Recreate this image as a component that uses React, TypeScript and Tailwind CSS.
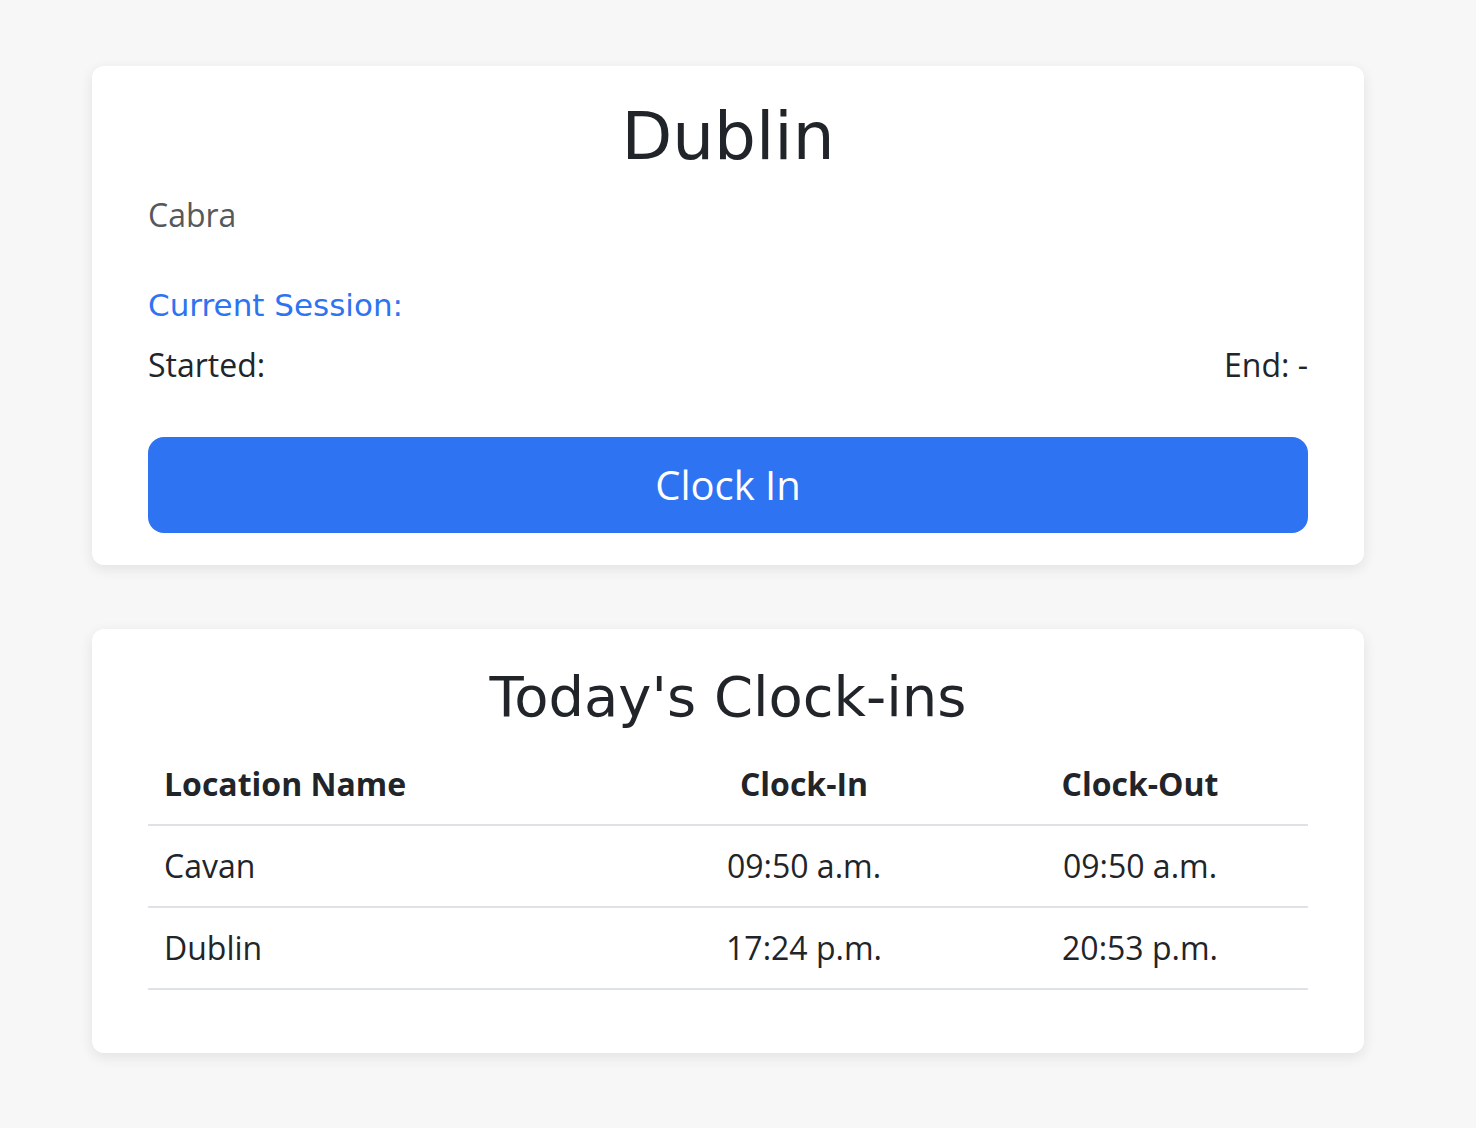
import React from 'react'

const heading = "font-['DejaVu_Sans',sans-serif]"
const body = "font-['Open_Sans',sans-serif]"

const rows = [
  { name: 'Cavan', clockIn: '09:50 a.m.', clockOut: '09:50 a.m.' },
  { name: 'Dublin', clockIn: '17:24 p.m.', clockOut: '20:53 p.m.' },
]

export default function App() {
  return (
    <div className={`min-h-screen bg-[#f7f7f7] pt-[66px] pb-[75px] text-[#212529] ${body}`}>
      {/* SESSION CARD */}
      <div className="ml-[92px] w-[1272px] bg-white rounded-[12px] shadow-[0_4px_14px_rgba(0,0,0,0.09)] px-[56px] pt-[31px] pb-[32px]">
        <h1 className={`${heading} text-center text-[66px] leading-[79px] font-normal`}>Dublin</h1>
        <p className="mt-[15px] text-[32px] leading-[48px] text-[#55595c]">Cabra</p>
        <h5 className={`${heading} mt-[48px] text-[31px] leading-[36px] text-[#2e73f1] font-normal`}>Current Session:</h5>
        <div className="mt-[18px] flex justify-between text-[32px] leading-[48px]">
          <span>Started:</span>
          <span>End: -</span>
        </div>
        <button
          type="button"
          className="mt-[48px] w-full h-[96px] rounded-[16px] bg-[#2e73f1] text-white text-[40px] leading-[96px]"
        >
          Clock In
        </button>
      </div>

      {/* TODAY'S CLOCK-INS */}
      <div className="mt-[64px] ml-[92px] w-[1272px] bg-white rounded-[12px] shadow-[0_4px_14px_rgba(0,0,0,0.09)] px-[56px] pt-[32px] pb-[63px]">
        <h2 className={`${heading} text-center text-[56px] leading-[72px] font-normal`}>Today's Clock-ins</h2>
        <div className="mt-[11px] text-[32px] leading-[48px]">
          <div className="grid grid-cols-[488px_336px_336px] border-b-2 border-[#dee2e6] font-bold">
            <div className="px-[16px] py-[16px]">Location Name</div>
            <div className="py-[16px] text-center">Clock-In</div>
            <div className="py-[16px] text-center">Clock-Out</div>
          </div>
          {rows.map((r) => (
            <div key={r.name} className="grid grid-cols-[488px_336px_336px] border-b-2 border-[#dee2e6]">
              <div className="px-[16px] py-[16px]">{r.name}</div>
              <div className="py-[16px] text-center">{r.clockIn}</div>
              <div className="py-[16px] text-center">{r.clockOut}</div>
            </div>
          ))}
        </div>
      </div>
    </div>
  )
}
